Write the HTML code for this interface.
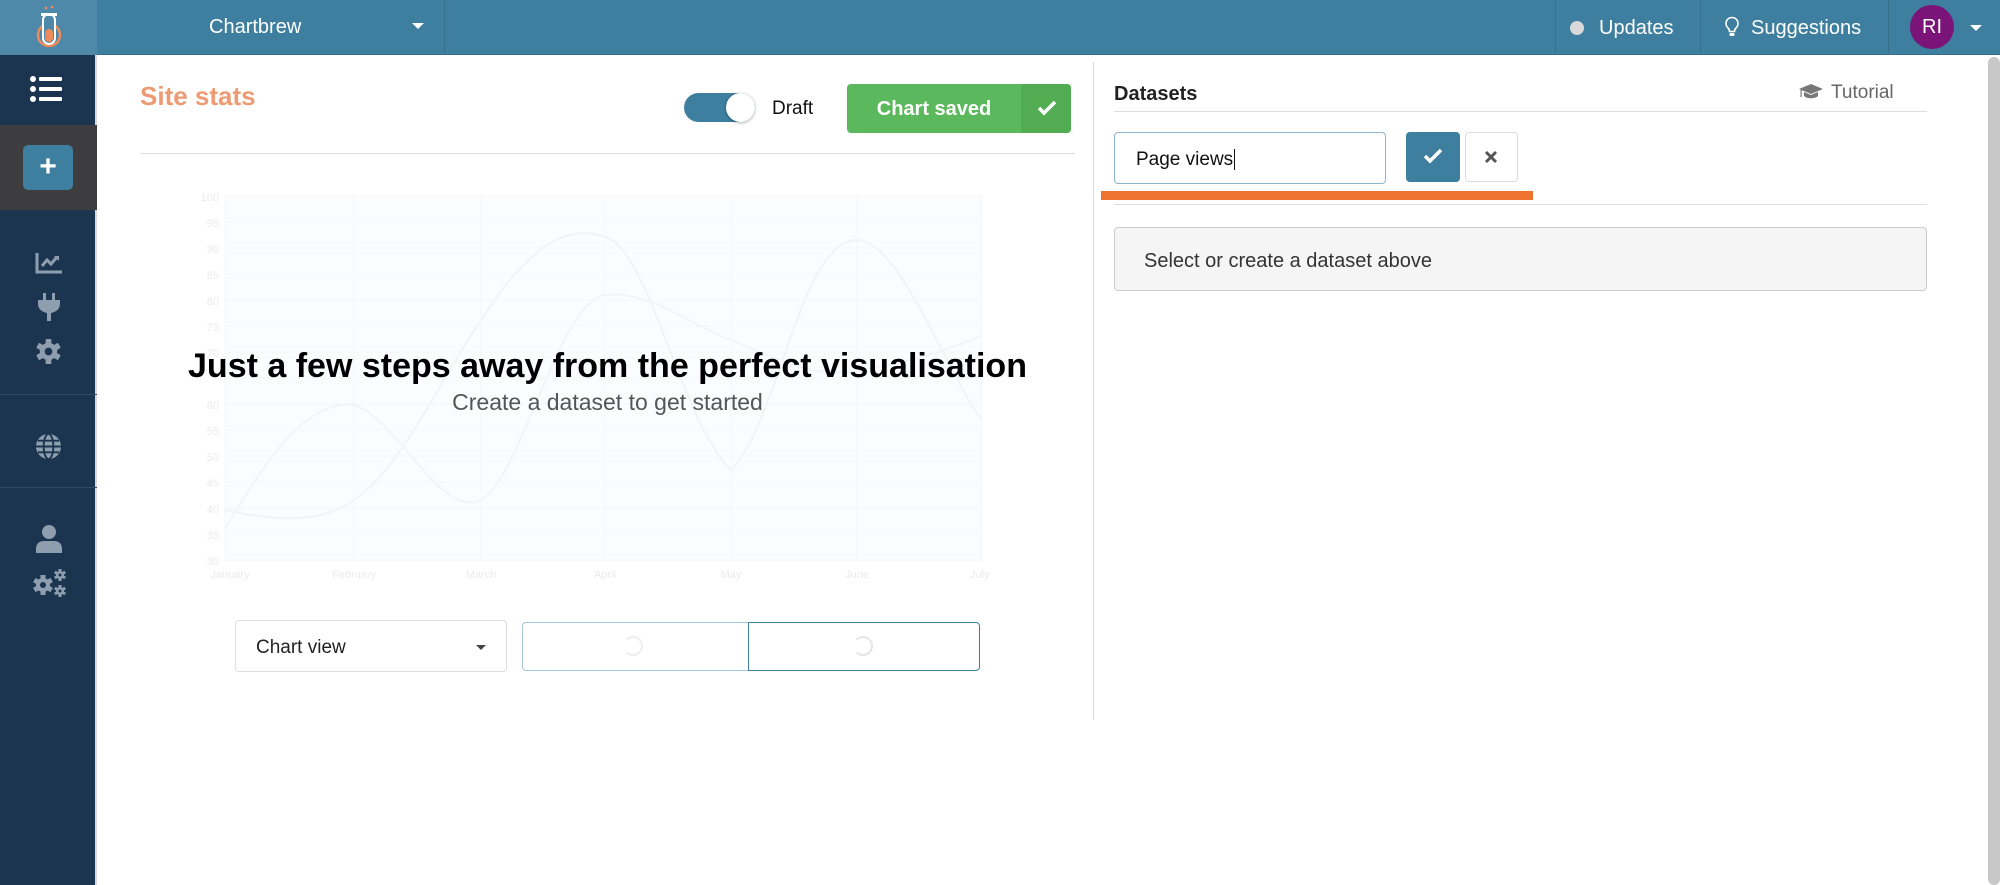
<!DOCTYPE html>
<html><head><meta charset="utf-8"><style>
*{box-sizing:border-box;margin:0;padding:0}
body{width:2000px;height:885px;overflow:hidden;background:#fff;font-family:"Liberation Sans",sans-serif;position:relative}
.a{position:absolute}
.top{left:0;top:0;width:2000px;height:55px;background:#3e7e9e;border-bottom:1px solid #336f8d}
.vd{top:0;width:1px;height:55px;background:#356f8c}
.tt{color:#fff;font-size:20px}
.side{left:0;top:55px;width:97px;height:830px;background:#1b3550;border-right:2px solid #d9d9d9}
</style></head><body>
<div class="a top"></div>
<div class="a" style="left:0;top:0;width:97px;height:55px;background:#4f89a9"></div>
<svg class="a" style="left:33px;top:5px" width="32" height="44" viewBox="0 0 32 44"><circle cx="16" cy="30" r="11" fill="none" stroke="#ee8b5b" stroke-width="2.5"/><rect x="10" y="9" width="12" height="30" rx="6" fill="#4f89a9" stroke="#fff" stroke-width="2"/><rect x="12" y="24" width="8" height="13" rx="4" fill="#ee8b5b"/><rect x="8" y="8" width="16" height="3" fill="#fff"/><circle cx="13" cy="3" r="1.3" fill="#ee8b5b"/><circle cx="19" cy="2" r="1.3" fill="#ee8b5b"/></svg>
<div class="a tt" style="left:209px;top:16px">Chartbrew</div>
<div class="a" style="left:412px;top:23px;border-left:6px solid transparent;border-right:6px solid transparent;border-top:6px solid #fff"></div>
<div class="a vd" style="left:444px"></div>
<div class="a vd" style="left:1555px"></div>
<div class="a vd" style="left:1700px"></div>
<div class="a vd" style="left:1888px"></div>
<div class="a" style="left:1570px;top:21px;width:14px;height:14px;border-radius:50%;background:#d9d9d9"></div>
<div class="a tt" style="left:1599px;top:17px">Updates</div>
<svg class="a" style="left:1724px;top:16px" width="16" height="22" viewBox="0 0 16 22"><path d="M8 1.5a6 6 0 0 0-4 10.5c1 1 1.5 2 1.5 3.5h5c0-1.5.5-2.5 1.5-3.5A6 6 0 0 0 8 1.5z" fill="none" stroke="#fff" stroke-width="1.6"/><rect x="5.5" y="17" width="5" height="3" rx="1" fill="#fff"/></svg>
<div class="a tt" style="left:1751px;top:17px">Suggestions</div>
<div class="a" style="left:1910px;top:5px;width:44px;height:44px;border-radius:50%;background:#7b1478;color:#fff;font-size:20px;text-align:center;line-height:44px">RI</div>
<div class="a" style="left:1970px;top:25px;border-left:6px solid transparent;border-right:6px solid transparent;border-top:6px solid #fff"></div>

<div class="a side"></div>
<div class="a" style="left:0;top:125px;width:97px;height:85px;background:#3d3d3f"></div>
<svg class="a" style="left:29px;top:76px" width="34" height="26" viewBox="0 0 34 26"><circle cx="4" cy="3" r="3" fill="#fff"/><circle cx="4" cy="13" r="3" fill="#fff"/><circle cx="4" cy="23" r="3" fill="#fff"/><rect x="10" y="1" width="23" height="4" rx="1" fill="#fff"/><rect x="10" y="11" width="23" height="4" rx="1" fill="#fff"/><rect x="10" y="21" width="23" height="4" rx="1" fill="#fff"/></svg>
<div class="a" style="left:23px;top:145px;width:50px;height:45px;background:#3e7e9e;border-radius:5px;color:#fff;font-size:30px;font-weight:bold;text-align:center;line-height:44px">+</div>
<svg class="a" style="left:35px;top:252px" width="28" height="22" viewBox="0 0 28 22"><path d="M2 1v19h25" fill="none" stroke="#8e9eae" stroke-width="3"/><path d="M7 14l5-6 4 4 6-7" fill="none" stroke="#8e9eae" stroke-width="3"/><path d="M19 4h5v5z" fill="#8e9eae"/></svg>
<svg class="a" style="left:37px;top:293px" width="24" height="28" viewBox="0 0 24 28"><rect x="6" y="0" width="3" height="7" fill="#8e9eae"/><rect x="15" y="0" width="3" height="7" fill="#8e9eae"/><path d="M1 7h22v4c0 5-4 8-9 9v8h-4v-8c-5-1-9-4-9-9z" fill="#8e9eae"/></svg>
<svg class="a" style="left:35px;top:338px" width="27" height="27" viewBox="-14 -14 28 28"><g fill="#8e9eae"><circle r="9"/><rect x="-3" y="-13" width="6" height="26" rx="1"/><rect x="-3" y="-13" width="6" height="26" rx="1" transform="rotate(60)"/><rect x="-3" y="-13" width="6" height="26" rx="1" transform="rotate(120)"/></g><circle r="4" fill="#1b3550"/></svg>
<div class="a" style="left:0;top:394px;width:97px;height:1px;background:#2e4963"></div>
<svg class="a" style="left:35px;top:433px" width="27" height="27" viewBox="0 0 28 28"><circle cx="14" cy="14" r="13" fill="#8e9eae"/><g fill="none" stroke="#1b3550" stroke-width="2"><ellipse cx="14" cy="14" rx="5" ry="13"/><path d="M1 14h26M3 8h22M3 20h22"/></g></svg>
<div class="a" style="left:0;top:487px;width:97px;height:1px;background:#2e4963"></div>
<svg class="a" style="left:36px;top:525px" width="26" height="28" viewBox="0 0 26 28"><circle cx="13" cy="7" r="7" fill="#8e9eae"/><path d="M0 28v-4c0-5 3-8 8-8h10c5 0 8 3 8 8v4z" fill="#8e9eae"/></svg>
<svg class="a" style="left:32px;top:569px" width="36" height="28" viewBox="0 0 36 28"><g fill="#8e9eae"><g transform="translate(11,16)"><circle r="7"/><rect x="-2.5" y="-10" width="5" height="20"/><rect x="-2.5" y="-10" width="5" height="20" transform="rotate(60)"/><rect x="-2.5" y="-10" width="5" height="20" transform="rotate(120)"/></g><g transform="translate(28,6)"><circle r="4"/><rect x="-1.5" y="-6" width="3" height="12"/><rect x="-1.5" y="-6" width="3" height="12" transform="rotate(60)"/><rect x="-1.5" y="-6" width="3" height="12" transform="rotate(120)"/></g><g transform="translate(28,22)"><circle r="4"/><rect x="-1.5" y="-6" width="3" height="12"/><rect x="-1.5" y="-6" width="3" height="12" transform="rotate(60)"/><rect x="-1.5" y="-6" width="3" height="12" transform="rotate(120)"/></g></g><circle cx="11" cy="16" r="3" fill="#1b3550"/><circle cx="28" cy="6" r="1.5" fill="#1b3550"/><circle cx="28" cy="22" r="1.5" fill="#1b3550"/></svg>

<div class="a" style="left:140px;top:81px;font-size:26px;font-weight:bold;color:#ee9a72">Site stats</div>
<div class="a" style="left:684px;top:93px;width:71px;height:29px;border-radius:15px;background:#3e7e9e"></div>
<div class="a" style="left:726px;top:93px;width:29px;height:29px;border-radius:50%;background:#fff;box-shadow:0 1px 3px rgba(0,0,0,.3)"></div>
<div class="a" style="left:772px;top:98px;font-size:19px;color:#111">Draft</div>
<div class="a" style="left:847px;top:84px;width:224px;height:49px;border-radius:4px;background:#5cb85c;overflow:hidden"><div class="a" style="left:174px;top:0;width:50px;height:49px;background:#52ad52"></div><div class="a" style="left:0;top:14px;width:174px;text-align:center;color:#fff;font-weight:bold;font-size:20px">Chart saved</div>
<svg class="a" style="left:190px;top:16px" width="20" height="16" viewBox="0 0 20 16"><path d="M2 8l5 5L18 2" fill="none" stroke="#fff" stroke-width="3.5"/></svg></div>
<div class="a" style="left:140px;top:153px;width:935px;height:1px;background:#ddd"></div>
<div class="a" style="left:1093px;top:62px;width:1px;height:658px;background:#ddd"></div>

<svg class="a" style="left:190px;top:190px" width="810" height="400" viewBox="190 190 810 400">
<rect x="225" y="196" width="757" height="365" fill="#fbfcfd"/>
<g stroke="#f6f6f7" stroke-width="1"><path d="M225 196h757M225 222h757M225 248h757M225 274h757M225 300h757M225 326h757M225 352h757M225 378h757M225 404h757M225 430h757M225 456h757M225 482h757M225 508h757M225 534h757M225 560h757"/><path d="M225 196v365M354 196v365M481 196v365M605 196v365M731 196v365M857 196v365M981 196v365"/></g>
<g fill="#eaebec" font-size="11" text-anchor="end" font-family="Liberation Sans"><text x="219" y="201">100</text><text x="219" y="227">95</text><text x="219" y="253">90</text><text x="219" y="279">85</text><text x="219" y="305">80</text><text x="219" y="331">75</text><text x="219" y="357">70</text><text x="219" y="409">60</text><text x="219" y="435">55</text><text x="219" y="461">50</text><text x="219" y="487">45</text><text x="219" y="513">40</text><text x="219" y="539">35</text><text x="219" y="565">30</text></g>
<g fill="#eaebec" font-size="11" text-anchor="middle" font-family="Liberation Sans"><text x="230" y="578">January</text><text x="354" y="578">February</text><text x="481" y="578">March</text><text x="605" y="578">April</text><text x="731" y="578">May</text><text x="857" y="578">June</text><text x="980" y="578">July</text></g>
<path d="M225 510C270 520 320 525 354 500C400 470 440 380 481 320C520 260 560 220 605 237C650 250 680 420 731 470C780 420 800 240 857 240C900 240 950 380 982 420" fill="none" stroke="#f1f3f5" stroke-width="2"/>
<path d="M225 530C270 450 310 400 354 405C400 420 440 520 481 500C520 480 560 300 605 295C650 290 690 325 731 340C780 360 820 380 857 370C900 365 950 350 982 335" fill="none" stroke="#f3f4f5" stroke-width="2"/>
</svg>
<div class="a" style="left:100px;top:347px;width:1015px;text-align:center;font-size:34px;font-weight:bold;color:#000">Just a few steps away from the perfect visualisation</div>
<div class="a" style="left:140px;top:389px;width:935px;text-align:center;font-size:23px;color:#555">Create a dataset to get started</div>

<div class="a" style="left:235px;top:620px;width:272px;height:52px;border:1px solid #ddd;border-radius:4px"><div class="a" style="left:20px;top:16px;font-size:19px;color:#222">Chart view</div><div class="a" style="left:240px;top:24px;border-left:5px solid transparent;border-right:5px solid transparent;border-top:5px solid #444"></div></div>
<div class="a" style="left:522px;top:622px;width:228px;height:49px;border:1px solid #a9c6d6;border-right:none;border-radius:4px 0 0 4px"></div>
<div class="a" style="left:748px;top:622px;width:232px;height:49px;border:1px solid #3e7e9e;border-radius:0 4px 4px 0"></div>
<div class="a" style="left:623px;top:636px;width:20px;height:20px;border-radius:50%;border:2px solid #eee;border-left-color:transparent"></div>
<div class="a" style="left:853px;top:636px;width:20px;height:20px;border-radius:50%;border:2px solid #e5e5e5;border-left-color:transparent"></div>

<div class="a" style="left:1114px;top:83px;font-size:20px;font-weight:bold;color:#222">Datasets</div>
<svg class="a" style="left:1799px;top:84px" width="24" height="16" viewBox="0 0 24 16"><path d="M12 0L0 5l12 5 12-5z" fill="#777"/><path d="M5 8v4c3 3 11 3 14 0V8l-7 3z" fill="#777"/><rect x="1.5" y="5" width="1.2" height="8" fill="#777"/></svg>
<div class="a" style="left:1831px;top:82px;font-size:19px;color:#666">Tutorial</div>
<div class="a" style="left:1114px;top:111px;width:813px;height:1px;background:#ddd"></div>
<div class="a" style="left:1114px;top:132px;width:272px;height:52px;border:1px solid #8db5d0;border-radius:4px"><div class="a" style="left:21px;top:16px;font-size:19px;color:#111">Page views<span style="border-left:1px solid #111;margin-left:1px"></span></div></div>
<div class="a" style="left:1406px;top:132px;width:54px;height:50px;border-radius:4px;background:#3e7e9e"></div>
<svg class="a" style="left:1423px;top:148px" width="20" height="16" viewBox="0 0 20 16"><path d="M2 8l5 5L18 2" fill="none" stroke="#fff" stroke-width="3.5"/></svg>
<div class="a" style="left:1465px;top:132px;width:53px;height:50px;border-radius:4px;border:1px solid #ddd"></div>
<svg class="a" style="left:1484px;top:150px" width="14" height="14" viewBox="0 0 14 14"><path d="M2 2l10 10M12 2L2 12" stroke="#555" stroke-width="3"/></svg>
<div class="a" style="left:1101px;top:191px;width:432px;height:9px;background:#ee7330"></div>
<div class="a" style="left:1114px;top:204px;width:813px;height:1px;background:#ddd"></div>
<div class="a" style="left:1114px;top:227px;width:813px;height:64px;background:#f5f5f5;border:1px solid #ccc;border-radius:4px"><div class="a" style="left:29px;top:22px;font-size:20px;color:#333">Select or create a dataset above</div></div>
<div class="a" style="left:1988px;top:57px;width:12px;height:828px;background:#c8c8c8;border-radius:6px"></div>
</body></html>
